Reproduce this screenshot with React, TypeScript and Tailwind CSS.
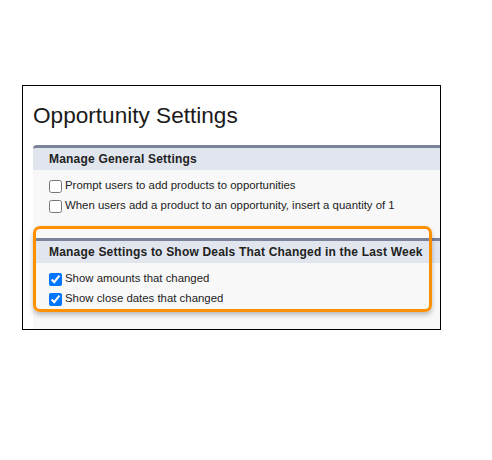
import React from 'react';

const font = { fontFamily: '"Liberation Sans", Arial, sans-serif' };

const Row = ({ label, checked }: { label: string; checked?: boolean }) => (
    <label className="flex items-center h-[20px] gap-[3px] text-[11.4px] text-[#222]">
        <input type="checkbox" defaultChecked={checked} className="m-0 w-[13px] h-[13px]" />
        <span>{label}</span>
    </label>
);

const Section = ({ title, children }: { title: string; children: React.ReactNode }) => (
    <div className="bg-[#f8f8f8]">
        <div className="border-t-[3px] border-[#7a8399] rounded-tl-[4px] bg-[#e1e5ee] h-[25px] flex items-center pl-4">
            <span className="font-bold text-[12px] tracking-[0.2px] text-[#222]">{title}</span>
        </div>
        <div className="pl-4 pt-[6px] pb-[11px]">{children}</div>
    </div>
);

export default function App() {
    return (
        <div className="w-[492px] h-[460px] bg-white pt-[85px] pl-[22px]" style={font}>
            <div className="w-[419px] h-[245px] border border-black flex flex-col bg-white">
                {/* page title */}
                <h1 className="text-[22.6px] text-[#1b1b1b] leading-none pl-[10px] pt-[19px] h-[59px]">Opportunity Settings</h1>

                <div className="ml-[10px] flex-1 flex flex-col bg-[#f8f8f8]">
                    <Section title="Manage General Settings">
                        <Row label="Prompt users to add products to opportunities" />
                        <Row label="When users add a product to an opportunity, insert a quantity of 1" />
                    </Section>

                    {/* highlighted section, orange box drawn over it */}
                    <div className="relative mt-[11px] flex-1">
                        <Section title="Manage Settings to Show Deals That Changed in the Last Week">
                            <Row label="Show amounts that changed" checked />
                            <Row label="Show close dates that changed" checked />
                        </Section>
                        <div className="absolute left-0 top-[-12px] w-[399px] h-[86px] border-[3px] border-[#ff9100] rounded-[7px] shadow-[0_3px_5px_rgba(0,0,0,0.25)] pointer-events-none" />
                    </div>
                </div>
            </div>
        </div>
    );
}
